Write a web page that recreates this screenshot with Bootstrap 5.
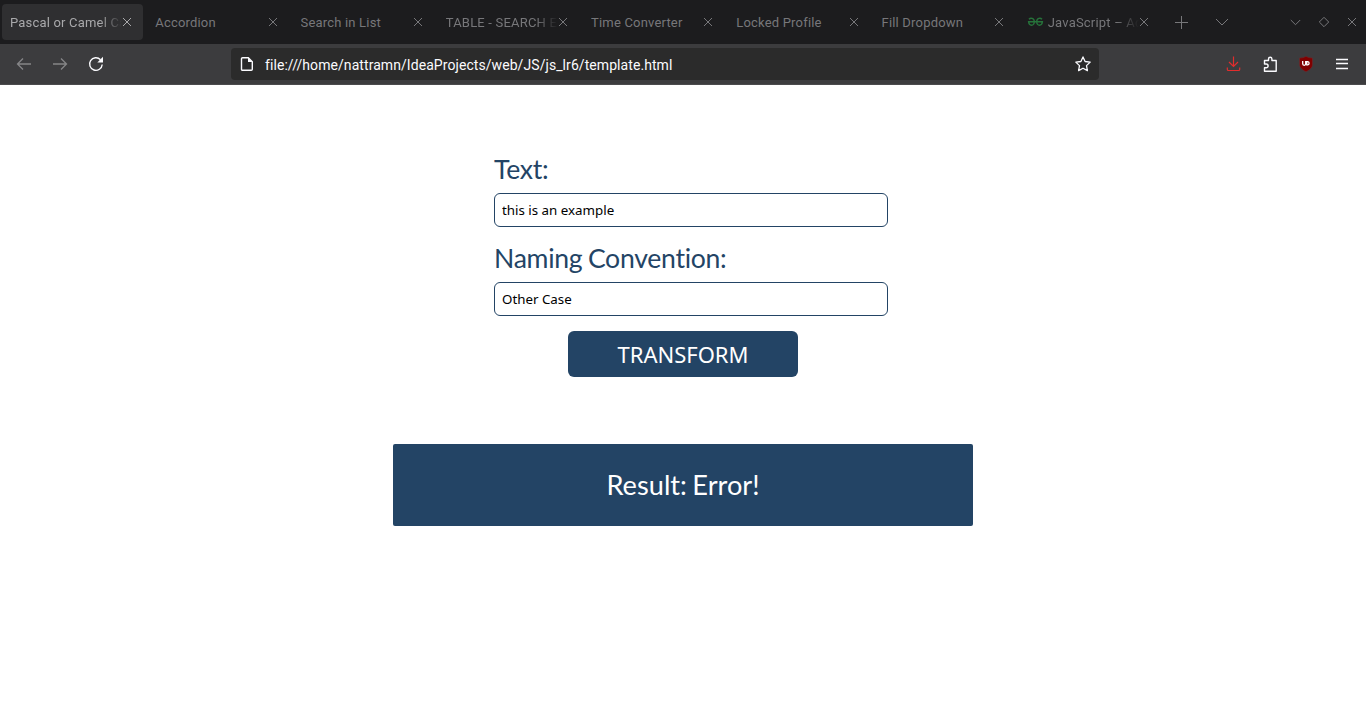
<!DOCTYPE html>
<html lang="en">
<head>
<meta charset="utf-8">
<title>Pascal or Camel Case</title>
<link rel="stylesheet" href="https://cdn.jsdelivr.net/npm/bootstrap@5.3.0/dist/css/bootstrap.min.css">
<style>
  body { background: #fff; font-family: "Noto Sans", sans-serif; overflow: hidden; }
  svg { display: block; flex: none; }
  header, nav { fill: none; stroke: currentColor; }
  .tabstrip { height: 44px; background: #1c1c1e; color: #77777a; font: 13px/36px Roboto, sans-serif; letter-spacing: .19px; }
  .tab-slot { width: 145.25px; padding: 4px 2px; flex: none; }
  .tab-face { height: 36px; border-radius: 4px; padding-left: 8px; padding-right: 11px; }
  .tab-face.current { background: #2f2f31; color: #a9a9ab; }
  .tab-title { white-space: nowrap; overflow: hidden; min-width: 0; padding-top: 1px; line-height: 35px; }
  .tab-title.long { -webkit-mask-image: linear-gradient(to left, transparent, #000 22px); mask-image: linear-gradient(to left, transparent, #000 22px); }
  .after-tabs { padding: 0 9px 0 13px; }
  .list-tabs { margin-left: 27px; }
  .window-buttons { gap: 17px; }
  .toolbar { height: 41px; background: #3c3c3e; border-bottom: 1px solid #4b4b4d; color: #fbfbfe; padding: 0 16px; }
  .nav-buttons, .tool-buttons { gap: 20px; }
  .urlbar { width: 868px; height: 32px; background: #2b2b2b; border-radius: 4px; margin-left: 127px; padding: 0 8px; }
  .url-text { font: 14px/30px Roboto, sans-serif; letter-spacing: .07px; margin-left: 10px; padding-top: 2px; white-space: nowrap; }
  .faded { color: #858587; }
  .form-area { width: 394px; margin: 67px 0 0 494px; }
  .field-name { font: 26.6px/34px Lato, sans-serif; letter-spacing: -.28px; word-spacing: -1px; font-variant-ligatures: none; color: #234465; height: 34px; margin-bottom: 7px; white-space: nowrap; }
  .field-box { height: 34px; border: 1px solid #234465; border-radius: 6px; padding: 0 7px; font-size: 13.333px; color: #000; box-shadow: none; }
  .field-box + .field-name { margin-top: 14px; }
  .btn-transform { width: 230px; height: 46px; background: #234465; color: #fff; border: 0; border-radius: 6px; font-size: 22px; line-height: 46px; padding: 0; margin-top: 15px; }
  .result { width: 580px; height: 82px; margin-top: 67px; background: #234465; color: #fff; border-radius: 2px; font: 27.2px/82px Lato, sans-serif; word-spacing: -1.5px; }
</style>
</head>
<body>
<svg class="d-none">
  <symbol id="x" viewBox="0 0 10 10"><path d="M1 1l8 8M9 1L1 9"/></symbol>
  <symbol id="down" viewBox="0 0 14 8"><path d="M1 1l6 6 6-6"/></symbol>
</svg>
<header class="tabstrip d-flex">
  <div class="tab-slot"><div class="tab-face current d-flex align-items-center"><span class="tab-title long flex-fill">Pascal or Camel Ca</span><svg width="10" height="10"><use href="#x"/></svg></div></div>
  <div class="tab-slot"><div class="tab-face d-flex align-items-center"><span class="tab-title flex-fill">Accordion</span><svg width="10" height="10"><use href="#x"/></svg></div></div>
  <div class="tab-slot"><div class="tab-face d-flex align-items-center"><span class="tab-title flex-fill">Search in List</span><svg width="10" height="10"><use href="#x"/></svg></div></div>
  <div class="tab-slot"><div class="tab-face d-flex align-items-center"><span class="tab-title long flex-fill">TABLE - SEARCH E</span><svg width="10" height="10"><use href="#x"/></svg></div></div>
  <div class="tab-slot"><div class="tab-face d-flex align-items-center"><span class="tab-title flex-fill">Time Converter</span><svg width="10" height="10"><use href="#x"/></svg></div></div>
  <div class="tab-slot"><div class="tab-face d-flex align-items-center"><span class="tab-title flex-fill">Locked Profile</span><svg width="10" height="10"><use href="#x"/></svg></div></div>
  <div class="tab-slot"><div class="tab-face d-flex align-items-center"><span class="tab-title flex-fill">Fill Dropdown</span><svg width="10" height="10"><use href="#x"/></svg></div></div>
  <div class="tab-slot"><div class="tab-face d-flex align-items-center"><svg class="me-1" width="17" height="10" viewBox="0 0 17 10" stroke="#26723a" stroke-width="1.4"><path d="M2 2.300C3.500.6 7.300.8 7.300 4.800c0 4.600-5.400 4.500-5.700 0H15.400c-.3 4.500-5.700 4.600-5.700 0C9.700.8 13.500.6 15 2.300"/></svg><span class="tab-title long flex-fill">JavaScript – Ad</span><svg width="10" height="10"><use href="#x"/></svg></div></div>
  <div class="after-tabs d-flex align-items-center flex-fill">
    <svg width="13" height="13" viewBox="0 0 13 13"><path d="M6.500 0v13M0 6.500h13"/></svg>
    <svg class="list-tabs" width="14" height="8"><use href="#down"/></svg>
    <div class="window-buttons d-flex align-items-center ms-auto">
      <svg width="11" height="7" viewBox="0 0 11 7"><path d="M.8 1l4.700 4.700L10.200 1"/></svg>
      <svg width="12" height="12" viewBox="0 0 12 12"><path d="M6 1.300L10.700 6 6 10.700 1.300 6z"/></svg>
      <svg width="10" height="10"><use href="#x"/></svg>
    </div>
  </div>
</header>
<nav class="toolbar d-flex align-items-center">
  <div class="nav-buttons d-flex">
    <svg class="faded" width="16" height="16" viewBox="0 0 16 16" stroke-width="1.300"><path d="M15 8H1.500M7 2.500L1.500 8 7 13.500"/></svg>
    <svg class="faded" width="16" height="16" viewBox="0 0 16 16" stroke-width="1.300"><path d="M1 8h13.500M9 2.500L14.500 8 9 13.500"/></svg>
    <svg width="16" height="16" viewBox="0 0 16 16" stroke-width="1.400"><path d="M14.200 8.500A6.300 6.300 0 1 1 12.500 3.700"/><path d="M15 .8v5.700H9.300z" fill="currentColor" stroke="none"/></svg>
  </div>
  <div class="urlbar d-flex align-items-center">
    <svg width="16" height="16" viewBox="0 0 16 16" stroke-width="1.400"><path d="M3.500 1.700h5.800l4 4v7.600a1 1 0 0 1-1 1H3.500a1 1 0 0 1-1-1V2.700a1 1 0 0 1 1-1z"/><path d="M9 1.500V6h4.500z" fill="currentColor" stroke="none"/></svg>
    <span class="url-text flex-fill">file:///home/nattramn/IdeaProjects/web/JS/js_lr6/template.html</span>
    <svg width="16" height="16" viewBox="0 0 16 16" stroke-width="1.300" stroke-linejoin="round"><path d="M8 .9l2.100 4.600 5.100.6-3.700 3.500.9 5L8 12.200l-4.400 2.400.9-5L.8 6.100l5.100-.6z"/></svg>
  </div>
  <div class="tool-buttons d-flex align-items-center ms-auto">
    <svg width="16" height="16" viewBox="0 0 16 16" stroke="#e22d2d" stroke-width="1.200"><path d="M7.500.5v10M3 6l4.500 4.500L12 6M1.300 11.500v2a1 1 0 0 0 1 1h10.400a1 1 0 0 0 1-1v-2"/></svg>
    <svg width="16" height="16" viewBox="0 0 16 16" stroke-width="1.400" stroke-linejoin="round"><path d="M2.500 7V4.500h4V3a1.700 1.700 0 0 1 3.400 0v1.500h4.300v10.700H2.500v-3.400h1.700a1.700 1.700 0 0 0 0-3.800H2.500z"/></svg>
    <svg width="16" height="16" viewBox="0 0 16 16" stroke="none"><path d="M8 .3c2 1.300 4 1.700 6.500 1.700v6c0 4-3 6-6.500 7.700C4.500 14 1.500 12 1.500 8V2C4 2 6 1.600 8 .3z" fill="#800000" stroke="#6a3034" stroke-width=".5"/><path d="M4.700 5v2.800a1.500 1.500 0 0 0 3 0V5M8.800 5.600h1a1.700 1.700 0 0 1 0 3.300h-1z" stroke="#fff" stroke-width="1.300"/></svg>
    <svg width="16" height="16" viewBox="0 0 16 16" stroke-width="1.300"><path d="M2 3.500h12M2 7.500h12M2 12.500h12"/></svg>
  </div>
</nav>
<main class="d-flex flex-column align-items-center">
  <form class="form-area align-self-start">
    <label class="field-name d-block" for="text">Text:</label>
    <input id="text" class="field-box form-control" value="this is an example">
    <label class="field-name d-block" for="conv">Naming Convention:</label>
    <input id="conv" class="field-box form-control" value="Other Case">
  </form>
  <button class="btn btn-transform" type="button">TRANSFORM</button>
  <div class="result text-center">Result: Error!</div>
</main>
<script src="https://cdn.jsdelivr.net/npm/bootstrap@5.3.0/dist/js/bootstrap.bundle.min.js"></script>
</body>
</html>
